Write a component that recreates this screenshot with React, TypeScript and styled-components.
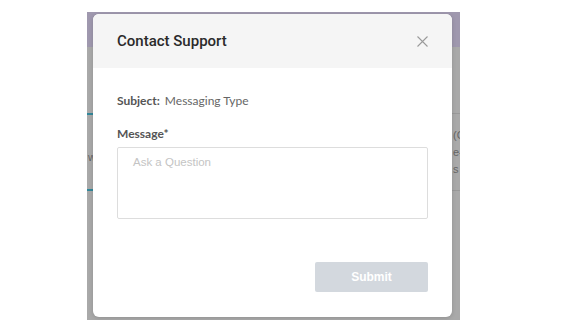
import * as React from 'react';
import styled, { createGlobalStyle } from 'styled-components';

const GlobalStyle = createGlobalStyle`
  html, body {
    margin: 0;
    padding: 0;
    background: #ffffff;
  }
  body {
    font-family: Lato, "Open Sans", "Liberation Sans", sans-serif;
  }
`;

const Stage = styled.div`
  width: 561px;
  height: 333px;
  padding: 12px 0 0 87px;
  box-sizing: border-box;
`;

// the page behind the dialog, already dimmed by the overlay
const Backdrop = styled.div`
  position: relative;
  width: 373px;
  height: 308px;
  overflow: hidden;
  background: #a9a9a9;
`;

const PageHeader = styled.div`
  height: 35px;
  background: #9f98ae;
`;

const PageBody = styled.div`
  padding-top: 66px;
`;

const PageRow = styled.div`
  display: grid;
  grid-template-columns: 8px 1fr 7px;
  height: 76px;
  border-top: 1px solid #999999;
  border-bottom: 1px solid #999999;
`;

const PageCell = styled.div<{ $accent?: boolean; $align?: string }>`
  display: flex;
  flex-direction: column;
  justify-content: ${p => (p.$align === 'left' ? 'flex-start' : 'center')};
  align-items: flex-start;
  margin: -1px 0;
  padding: ${p => (p.$align === 'left' ? '12px 0 0 0' : '10px 0 0 1px')};
  border-top: 2px solid ${p => (p.$accent ? '#32879a' : 'transparent')};
  border-bottom: 2px solid ${p => (p.$accent ? '#32879a' : 'transparent')};
  color: #656565;
  font-size: 11px;
  line-height: 17px;
  font-family: "Liberation Sans", Arial, sans-serif;
  white-space: nowrap;
`;

const Modal = styled.div`
  position: absolute;
  left: 6px;
  top: 2px;
  width: 359px;
  height: 303px;
  display: flex;
  flex-direction: column;
  background: #ffffff;
  border-radius: 6px;
  overflow: hidden;
  box-shadow: 0 1px 4px rgba(0, 0, 0, 0.15);
`;

const ModalHeader = styled.div`
  height: 54px;
  display: flex;
  align-items: center;
  justify-content: space-between;
  padding: 0 24px;
  background: #f5f5f5;
  flex-shrink: 0;
`;

const Title = styled.div`
  font-family: Roboto, "Liberation Sans", sans-serif;
  font-weight: 500;
  font-size: 15px;
  color: #2a2a2a;
  padding-bottom: 1px;
`;

const CloseButton = styled.button`
  width: 11px;
  height: 11px;
  padding: 0;
  border: none;
  background: none;
  display: flex;
  cursor: pointer;
`;

const ModalBody = styled.div`
  flex: 1;
  display: flex;
  flex-direction: column;
  padding: 25px 24px 25px;
`;

const SubjectLine = styled.div`
  font-size: 12px;
  line-height: 16px;
  color: #666666;
`;

const Label = styled.span`
  font-weight: 700;
  color: #555555;
  margin-right: 5px;
`;

const FieldLabel = styled.div`
  margin-top: 17px;
  font-size: 12px;
  line-height: 16px;
  font-weight: 700;
  color: #555555;
`;

const TextArea = styled.textarea`
  margin-top: 5px;
  width: 311px;
  height: 72px;
  box-sizing: border-box;
  padding: 8px 15px;
  border: 1px solid #dddddd;
  border-radius: 2px;
  resize: none;
  font-family: "Liberation Sans", Arial, sans-serif;
  font-size: 11.5px;
  color: #333333;
  outline: none;

  &::placeholder {
    color: #c4c4c4;
  }
`;

const Footer = styled.div`
  margin-top: auto;
  display: flex;
  justify-content: flex-end;
`;

const SubmitButton = styled.button`
  width: 113px;
  height: 30px;
  border: none;
  border-radius: 2px;
  background: #d3d8de;
  color: #ffffff;
  font-family: "Liberation Sans", Arial, sans-serif;
  font-weight: 700;
  font-size: 12px;
`;

const CloseIcon = () => (
    <svg width="11" height="11" viewBox="0 0 11 11">
        <path d="M0.5 0.5 L10.5 10.5 M10.5 0.5 L0.5 10.5" stroke="#9a9a9a" strokeWidth="1.1" fill="none"/>
    </svg>
);

export default function App() {
    return (
        <Stage>
            <GlobalStyle/>
            <Backdrop>
                <PageHeader/>
                <PageBody>
                    <PageRow>
                        <PageCell $accent={true}>w</PageCell>
                        <PageCell/>
                        <PageCell $align='left'>
                            <span>(C</span>
                            <span>e-</span>
                            <span>s</span>
                        </PageCell>
                    </PageRow>
                </PageBody>

                <Modal>
                    <ModalHeader>
                        <Title>Contact Support</Title>
                        <CloseButton aria-label='Close'><CloseIcon/></CloseButton>
                    </ModalHeader>
                    <ModalBody>
                        <SubjectLine><Label>Subject:</Label>Messaging Type</SubjectLine>
                        <FieldLabel>Message*</FieldLabel>
                        <TextArea placeholder='Ask a Question'/>
                        <Footer>
                            <SubmitButton disabled={true}>Submit</SubmitButton>
                        </Footer>
                    </ModalBody>
                </Modal>
            </Backdrop>
        </Stage>
    );
}
